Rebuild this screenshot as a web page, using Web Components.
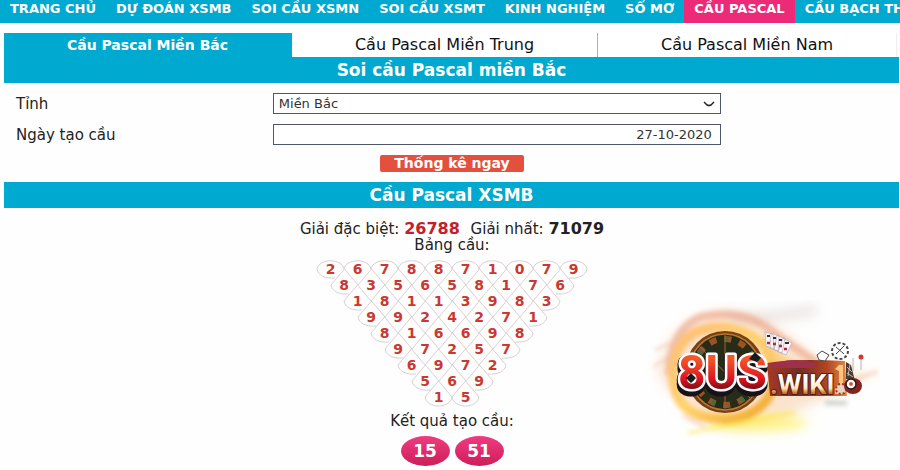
<!DOCTYPE html>
<html lang="vi">
<head>
<meta charset="utf-8">
<meta name="viewport" content="width=device-width, initial-scale=1">
<title>Cầu Pascal Miền Bắc</title>
<style>
	body {
		--blue: #00a9cf;
		--pink: #ec2a78;
		--text: #222;
		margin: 0;
		background: #fefefe;
		color: var(--text);
		font: 15px/16px "DejaVu Sans", Verdana, sans-serif;
	}
	main {
		position: relative;
		padding: 10px 0 4px 4px;
	}
	site-logo {
		position: absolute;
		right: 20px;
		bottom: 20px;
	}
</style>
</head>
<body>

<main-menu>
	<menu-item>TRANG CHỦ</menu-item>
	<menu-item>DỰ ĐOÁN XSMB</menu-item>
	<menu-item>SOI CẦU XSMN</menu-item>
	<menu-item>SOI CẦU XSMT</menu-item>
	<menu-item>KINH NGHIỆM</menu-item>
	<menu-item>SỔ MƠ</menu-item>
	<menu-item current>CẦU PASCAL</menu-item>
	<menu-item>CẦU BẠCH THỦ</menu-item>
</main-menu>

<main>
	<region-tabs>
		<region-tab current>Cầu Pascal Miền Bắc</region-tab>
		<region-tab>Cầu Pascal Miền Trung</region-tab>
		<region-tab>Cầu Pascal Miền Nam</region-tab>
	</region-tabs>
	<section-title>Soi cầu Pascal miền Bắc</section-title>
	<pascal-form date="27-10-2020"></pascal-form>
	<section-title>Cầu Pascal XSMB</section-title>
	<pascal-result special="26788" first="71079"></pascal-result>
	<site-logo></site-logo>
</main>

<script>
function attachTemplate(elem, html){
	const template = document.createElement('template');
	template.innerHTML = html;
	elem.attachShadow({mode: 'open'}).appendChild(template.content.cloneNode(true));
}

class MainMenu extends HTMLElement {
	constructor() {
		super();
		attachTemplate(this, `
			<style>
				:host { display: block; background: var(--blue); overflow: hidden; }
				nav { display: flex; }
			</style>
			<nav><slot></slot></nav>
		`);
	}
}

class MenuItem extends HTMLElement {
	constructor() {
		super();
		attachTemplate(this, `
			<style>
				:host { display: block; flex: none; }
				:host([current]) { background: var(--pink); }
				a {
					display: block;
					padding: 1px 10px 6px;
					color: #fff;
					font-size: 13px;
					font-weight: bold;
					text-decoration: none;
					white-space: nowrap;
				}
			</style>
			<a href="#"><slot></slot></a>
		`);
	}
}

class RegionTabs extends HTMLElement {
	constructor() {
		super();
		attachTemplate(this, `
			<style>
				:host { display: flex; margin-right: 3px; }
			</style>
			<slot></slot>
		`);
	}
}

class RegionTab extends HTMLElement {
	constructor() {
		super();
		attachTemplate(this, `
			<style>
				:host { display: block; flex: 1 1 auto; border-right: 1px solid #9db4c6; background: #fff; }
				:host(:last-child) { border-right-color: #eee; }
				:host([current]) { background: var(--blue); border-color: var(--blue); }
				a {
					display: block;
					padding: 4px 0;
					color: #111;
					font-size: 16px;
					text-align: center;
					text-decoration: none;
				}
				:host([current]) a { color: #fff; font-size: 14px; font-weight: bold; }
			</style>
			<a href="#"><slot></slot></a>
		`);
	}
}

class SectionTitle extends HTMLElement {
	constructor() {
		super();
		attachTemplate(this, `
			<style>
				:host { display: block; background: var(--blue); margin-right: 1px; }
				h2 {
					margin: 0;
					padding: 3px 0;
					color: #fff;
					font-size: 17px;
					line-height: 20px;
					text-align: center;
				}
			</style>
			<h2><slot></slot></h2>
		`);
	}
}

class PascalForm extends HTMLElement {
	constructor() {
		super();
		attachTemplate(this, `
			<style>
				:host { display: block; padding: 10px 0; }
				.row { display: grid; grid-template-columns: 30% 50%; align-items: center; margin-bottom: 10px; }
				label { padding-left: 12px; }
				.field { display: grid; align-items: center; }
				select, input {
					grid-area: 1 / 1;
					box-sizing: border-box;
					width: 100%;
					height: 21px;
					margin: 0;
					padding: 0 8px 0 5px;
					border: 1px solid #50566a;
					border-radius: 0;
					background: #fff;
					color: #333;
					font: 13px "DejaVu Sans", Verdana, sans-serif;
					appearance: none;
				}
				input { text-align: right; }
				svg { grid-area: 1 / 1; justify-self: end; margin-right: 6px; pointer-events: none; }
				button {
					display: block;
					margin: 0 auto;
					padding: 0 14px;
					border: 0;
					border-radius: 2px;
					background: #e3503e;
					color: #fff;
					font: bold 14px/17px "DejaVu Sans", Verdana, sans-serif;
				}
			</style>
			<form>
				<div class="row">
					<label for="province">Tỉnh</label>
					<div class="field">
						<select id="province"><option>Miền Bắc</option></select>
						<svg width="12" height="6" viewBox="0 0 12 6"><path d="M1 1 L4 4 Q6 5 8 4 L11 1" fill="none" stroke="#222" stroke-width="1.5"/></svg>
					</div>
				</div>
				<div class="row">
					<label for="date">Ngày tạo cầu</label>
					<div class="field"><input id="date" type="text"></div>
				</div>
				<button type="button">Thống kê ngay</button>
			</form>
		`);
		this.shadowRoot.getElementById('date').value = this.getAttribute('date');
	}
}

class PascalResult extends HTMLElement {
	constructor() {
		super();
		const special = this.getAttribute('special');
		const first = this.getAttribute('first');
		const rows = this.getRows(special + first);
		const last = rows[rows.length - 1].join('');
		attachTemplate(this, `
			<style>
				:host { display: block; padding-top: 13px; text-align: center; }
				p { margin: 0; }
				b { font-size: 16px; }
				.special { color: #c4202b; margin-right: 6px; }
				pascal-triangle { margin: 7px 0 6px; }
				.balls { display: flex; justify-content: center; gap: 5px; padding: 7px 0 0; }
			</style>
			<p>Giải đặc biệt: <b class="special">${special}</b> Giải nhất: <b>${first}</b></p>
			<p>Bảng cầu:</p>
			<pascal-triangle></pascal-triangle>
			<p>Kết quả tạo cầu:</p>
			<div class="balls">
				<result-ball>${last}</result-ball>
				<result-ball>${last[1] + last[0]}</result-ball>
			</div>
		`);
		this.shadowRoot.querySelector('pascal-triangle').rows = rows;
	}

	// every row holds the last digit of the sums of its neighbours above
	getRows(digits) {
		const rows = [digits.split('').map(Number)];
		while(rows[rows.length - 1].length > 2) {
			const prev = rows[rows.length - 1];
			rows.push(prev.slice(1).map((n, i) => (n + prev[i]) % 10));
		}
		return rows;
	}
}

class PascalTriangle extends HTMLElement {
	constructor() {
		super();
		attachTemplate(this, `
			<style>
				:host { display: block; padding: 1px 0 2px; }
				.row { display: flex; justify-content: center; }
				.cell {
					position: relative;
					width: 27px;
					color: #cb3830;
					font-size: 14px;
					font-weight: bold;
				}
				.cell svg { position: absolute; left: 0; top: -8px; overflow: visible; }
				.cell span { position: relative; }
				path { fill: none; stroke: #d9d0d2; }
			</style>
			<div id="rows"></div>
		`);
	}

	set rows(rows) {
		this.shadowRoot.getElementById('rows').innerHTML = rows.map((row, r) =>
			'<div class="row">' + row.map((n, i) => {
				let d = r == 0 ? 'M0 16 C2 5 25 5 27 16' : 'M0 16 L13.5 0 L27 16';
				if(r == rows.length - 1) d += 'M0 16 C2 28 25 28 27 16';
				else if(i == 0) d += 'M0 16 C1 22 8 26 18 25';
				else if(i == row.length - 1) d += 'M27 16 C26 22 19 26 9 25';
				return `<div class="cell"><svg width="27" height="32"><path d="${d}"/></svg><span>${n}</span></div>`;
			}).join('') + '</div>'
		).join('');
	}
}

class ResultBall extends HTMLElement {
	constructor() {
		super();
		attachTemplate(this, `
			<style>
				:host {
					display: block;
					width: 49px;
					border-radius: 50%;
					background: linear-gradient(#ee3c80, #cf1d59);
					color: #fff;
					font-size: 17px;
					font-weight: bold;
					line-height: 30px;
				}
			</style>
			<slot></slot>
		`);
	}
}

class SiteLogo extends HTMLElement {
	constructor() {
		super();
		attachTemplate(this, `
			<style>
				:host { display: block; pointer-events: none; }
				svg { display: block; }
				text { font-family: Roboto, "Liberation Sans", sans-serif; font-weight: bold; paint-order: stroke; stroke-linejoin: round; }
				.name { filter: drop-shadow(0 4px 0 #1a1219) drop-shadow(-1px 1px 0 #1a1219); }
			</style>
			<svg width="240" height="150" viewBox="0 0 240 150">
				<defs>
					<filter id="soft" x="-30%" y="-50%" width="160%" height="200%"><feGaussianBlur stdDeviation="6"/></filter>
					<filter id="light" x="-20%" y="-20%" width="140%" height="140%"><feGaussianBlur stdDeviation="2"/></filter>
					<linearGradient id="red" x2="0" y2="1">
						<stop offset=".25" stop-color="#f4582a"/><stop offset=".6" stop-color="#e01822"/><stop offset=".85" stop-color="#650812"/>
					</linearGradient>
					<linearGradient id="gold" x2="0" y2="1">
						<stop offset=".3" stop-color="#fff"/><stop offset=".6" stop-color="#ffe8c0"/><stop offset=".75" stop-color="#ca7328"/>
					</linearGradient>
					<linearGradient id="ring" x2="1" y2="1">
						<stop stop-color="#ffbd78"/><stop offset=".5" stop-color="#ffd36d"/><stop offset="1" stop-color="#f0a62d"/>
					</linearGradient>
					<linearGradient id="bar">
						<stop stop-color="#a83a25"/><stop offset=".4" stop-color="#712c23"/><stop offset=".75" stop-color="#b24522"/><stop offset="1" stop-color="#e38b47"/>
					</linearGradient>
				</defs>
				<g filter="url(#soft)">
					<path d="M18 75 Q25 20 85 10 Q140 15 190 75 L235 72 L205 90 L160 110 Q90 145 50 115Z" fill="#f8cda8" opacity=".55"/>
					<ellipse cx="118" cy="123" rx="50" ry="8" fill="#fff052" opacity=".7"/>
					<path d="M90 18 Q135 18 176 10" fill="none" stroke="#c9b6b0" stroke-width="9" opacity=".4"/>
				</g>
				<g filter="url(#light)" fill="none">
					<path d="M29 75 Q30 30 60 17 Q105 7 137 35 Q160 52 177 62" stroke="#eda88d" stroke-width="8" opacity=".65"/>
					<path d="M33 76 C33 35 62 25 88 28 Q122 35 130 57 C145 95 115 119 85 119 C50 118 35 105 33 76" stroke="url(#ring)" stroke-width="10"/>
					<path d="M122 38 Q138 72 178 65" stroke="#ffca72" stroke-width="9" opacity=".8"/>
					<path d="M48 133 Q105 122 155 112" stroke="#ffe83b" stroke-width="3" opacity=".6"/>
					<path d="M15 50 L30 43 M13 67 L27 58 M43 116 L65 127" stroke="#e6a07e" stroke-width="2" opacity=".5"/>
					<path d="M205 85 Q220 76 238 72" stroke="#f0bd9c" stroke-width="4" opacity=".5"/>
					<path d="M185 103 H207" stroke="#aaa" stroke-width="5" opacity=".5"/>
				</g>
				<ellipse cx="85" cy="72" rx="40" ry="41" fill="#77401a"/>
				<ellipse cx="85" cy="72" rx="36" ry="38" fill="#262c18" stroke="#b87729" stroke-width="1.5"/>
				<ellipse cx="85" cy="72" rx="31" ry="33" fill="none" stroke="#9a5228" stroke-width="6" stroke-dasharray="7 8"/>
				<ellipse cx="85" cy="72" rx="31" ry="33" fill="none" stroke="#377148" stroke-width="4" stroke-dasharray="4 26"/>
				<path d="M85 34 V110 M59 46 L111 99" stroke="#a0652d"/>

				<!-- fan of cards -->
				<g fill="#f7f5f7" stroke="#b8a7b3" stroke-width=".7">
					<path d="M125 32 l8 2 l1 15 l-8 -3z M131 33 l8 3 l-1 15 l-8 -3z M137 35 l8 4 l-3 14 l-8 -3z M143 38 l9 5 l-6 12 l-8 -3z"/>
				</g>
				<path d="M127 36h3 M133 38h3 M139 40h3 M145 43h4" stroke="#3b2634" stroke-width="2"/>
				<path d="M127 43h3 M133 44h3 M139 46h3 M144 49h3" stroke="#c1223a" stroke-width="2.5"/>
				<path d="M127 63 Q155 58 205 61 L207 96 H130Z" fill="url(#bar)"/>
				<path d="M129 65 Q153 56 176 63 L177 68 H130Z" fill="#9f3049"/>

				<!-- dice, chips and pins on the right -->
				<g fill="#fff" stroke="#4a4546" stroke-width="1">
					<path d="M177 55 l5 -4 l7 4 l-4 6 l-6 -1z"/>
					<circle cx="200" cy="51" r="8" stroke-dasharray="3 2" stroke-width="2"/>
					<path d="M196 47 l8 7 M204 46 l-8 8"/>
				</g>
				<path d="M206 62 L211 65 L215 81 L206 79Z" fill="#4a3b35"/>
				<path d="M207 67 l5 5 M207 73 l6 4 M210 64 l-2 12" stroke="#e6d4c5" stroke-width=".8"/>
				<path d="M213 58v13 M221 58v12" stroke="#b69c92" stroke-width=".8"/>
				<circle cx="221" cy="57" r="2.5" fill="#d63731"/>
				<path d="M195 69 l4 -4 h4 v20 h-4 v-14z M195 87h8v7h-8z" fill="#ffc583"/>
				<circle cx="201" cy="89" r="5" fill="#e8d2c0" stroke="#983b2a" stroke-width="2" stroke-dasharray="2 2"/>
				<ellipse cx="213" cy="86" rx="9" ry="8" fill="#842320"/>
				<circle cx="211" cy="84" r="5" fill="#fff" stroke="#2b1719" stroke-width="1.5"/>
				<circle cx="211" cy="84" r="2" fill="#dc5843"/>

				<text class="name" x="38" y="89" font-size="48" fill="url(#red)" stroke="#fff" stroke-width="5">8US</text>
				<path d="M51 73 l5 5 l-5 5 l-5 -5z M115 52 l6 6 l-4 4 l-8 -3z" fill="#171d1d"/>
				<text x="130" y="94" font-size="27" fill="url(#gold)" stroke="#5b1b10" stroke-width="2">.WIKI</text>
			</svg>
		`);
	}
}

customElements.define('main-menu', MainMenu);
customElements.define('menu-item', MenuItem);
customElements.define('region-tabs', RegionTabs);
customElements.define('region-tab', RegionTab);
customElements.define('section-title', SectionTitle);
customElements.define('pascal-form', PascalForm);
customElements.define('pascal-triangle', PascalTriangle);
customElements.define('result-ball', ResultBall);
customElements.define('pascal-result', PascalResult);
customElements.define('site-logo', SiteLogo);
</script>
</body>
</html>
